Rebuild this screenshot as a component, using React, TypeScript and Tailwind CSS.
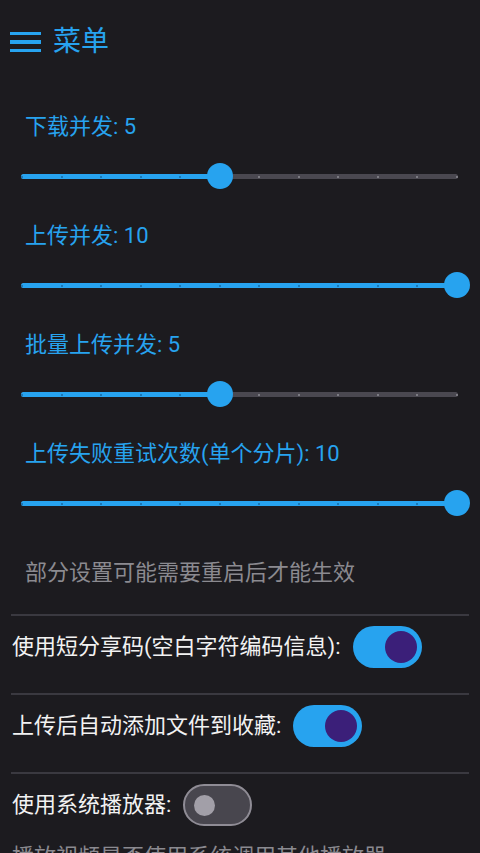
import React from 'react';

const SLIDERS = [
  { id: 'dl', label: '下载并发: 5', step: 5 },
  { id: 'ul', label: '上传并发: 10', step: 11 },
  { id: 'batch', label: '批量上传并发: 5', step: 5 },
  { id: 'retry', label: '上传失败重试次数(单个分片): 10', step: 11 },
];

const TOGGLES = [
  { id: 'short', label: '使用短分享码(空白字符编码信息):', on: true },
  { id: 'fav', label: '上传后自动添加文件到收藏:', on: true },
  { id: 'player', label: '使用系统播放器:', on: false, hint: '播放视频是否使用系统调用其他播放器' },
];

const STEPS = 11;
const TRACK_W = 435;

const Slider: React.FC<{ step: number }> = ({ step }) => {
  const pos = (step / STEPS) * TRACK_W;
  return (
    <div className="relative ml-[21px] h-[40px] w-[437px]">
      {/* inactive track */}
      <div className="absolute left-0 right-0 top-[18px] h-[5px] rounded-full bg-[#4a4850]" />
      {/* active track */}
      <div className="absolute left-0 top-[18px] h-[5px] rounded-full bg-[#27a3ef]" style={{ width: pos }} />
      {Array.from({ length: STEPS + 1 }).map((_, i) => {
        const x = (i / STEPS) * TRACK_W;
        return (
          <div
            key={i}
            className={
              i <= step
                ? 'absolute top-[19.5px] h-[2px] w-[2px] rounded-full bg-[#1a6aa3]'
                : 'absolute top-[19.5px] h-[2px] w-[2px] rounded-full bg-[#8e8c93]'
            }
            style={{ left: x }}
          />
        );
      })}
      <div
        className="absolute top-[7px] h-[26px] w-[26px] -ml-[12px] rounded-full bg-[#27a3ef]"
        style={{ left: pos }}
      />
    </div>
  );
};

const Switch: React.FC<{ on: boolean }> = ({ on }) =>
  on ? (
    <div className="flex h-[42px] w-[69px] shrink-0 items-center justify-end rounded-full bg-[#27a3ef] pr-[5px]">
      <div className="h-[32px] w-[32px] rounded-full bg-[#3b1f79]" />
    </div>
  ) : (
    <div className="flex h-[42px] w-[69px] shrink-0 items-center rounded-full border-2 border-[#8f8c95] bg-[#48464e] pl-[8.5px]">
      <div className="h-[21px] w-[21px] rounded-full bg-[#a29fa8]" />
    </div>
  );

export default function App() {
  return (
    <div className="flex h-[853px] w-full flex-col overflow-hidden bg-[#1c1b1f] font-['Roboto','Noto_Sans_CJK_SC',sans-serif]">
      {/* Header */}
      <div className="flex h-[84px] shrink-0 items-center gap-[12px] pl-[10px]">
        <div className="flex w-[31px] flex-col gap-[5px]">
          <span className="h-[3.5px] w-full bg-[#27a3ef]" />
          <span className="h-[3.5px] w-full bg-[#27a3ef]" />
          <span className="h-[3.5px] w-full bg-[#27a3ef]" />
        </div>
        <span className="text-[28px] leading-[36px] text-[#27a3ef]">菜单</span>
      </div>

      {/* Sliders */}
      <div className="flex shrink-0 flex-col pt-[28px]">
        {SLIDERS.map((s) => (
          <div key={s.id} className="flex flex-col pb-[25px]">
            <div className="pl-[25px] text-[22px] leading-[30px] text-[#27a3ef]">{s.label}</div>
            <div className="mt-[14px]">
              <Slider step={s.step} />
            </div>
          </div>
        ))}
      </div>

      <div className="mt-[10px] shrink-0 pl-[25px] text-[22px] leading-[30px] text-[#8b8a90]">
        部分设置可能需要重启后才能生效
      </div>

      {/* Toggles */}
      <div className="mt-[26px] flex shrink-0 flex-col">
        {TOGGLES.map((t) => (
          <div key={t.id} className="flex flex-col">
            <div className="mx-[11px] h-[2px] bg-[#3a3940]" />
            <div className="flex items-center gap-[12px] pl-[12px] pt-[10px] pb-[25px]">
              <span className="text-[22px] leading-[30px] text-[#f2f2f2]">{t.label}</span>
              <Switch on={t.on} />
            </div>
            {t.hint && (
              <div className="-mt-[9px] pl-[12px] text-[22px] leading-[30px] text-[#8b8a90]">{t.hint}</div>
            )}
          </div>
        ))}
      </div>
    </div>
  );
}
